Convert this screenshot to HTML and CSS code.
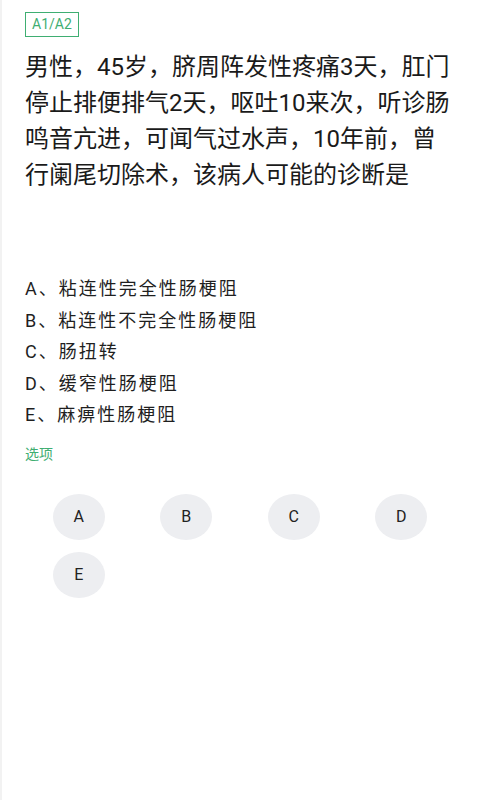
FILE: index.html
```html
<!DOCTYPE html>
<html lang="zh-CN">
<head>
<meta charset="utf-8">
<title>题目</title>
<link rel="stylesheet" href="styles.css">
</head>
<body>
<div class="page">
  <div class="tag">A1/A2</div>
  <p class="question">男性，45岁，脐周阵发性疼痛3天，肛门停止排便排气2天，呕吐10来次，听诊肠鸣音亢进，可闻气过水声，10年前，曾行阑尾切除术，该病人可能的诊断是</p>
  <ul class="options">
    <li>A、粘连性完全性肠梗阻</li>
    <li>B、粘连性不完全性肠梗阻</li>
    <li>C、肠扭转</li>
    <li>D、缓窄性肠梗阻</li>
    <li>E、麻痹性肠梗阻</li>
  </ul>
  <div class="label">选项</div>
  <div class="choices">
    <div class="cell"><span class="choice">A</span></div>
    <div class="cell"><span class="choice">B</span></div>
    <div class="cell"><span class="choice">C</span></div>
    <div class="cell"><span class="choice">D</span></div>
    <div class="cell"><span class="choice">E</span></div>
  </div>
</div>
</body>
</html>
```
FILE: styles.css
```css
html, body {
  margin: 0;
  padding: 0;
  background: #ffffff;
}
body {
  font-family: Roboto, "Noto Sans CJK SC", sans-serif;
  color: #1c1c1c;
}
.page {
  min-height: 800px;
  box-sizing: border-box;
  border-left: 2px solid #f2f2f2;
  padding: 12px 25px 0 23px;
}
.tag {
  width: fit-content;
  box-sizing: border-box;
  height: 25px;
  line-height: 23px;
  padding: 0 6px;
  border: 1px solid #3fae72;
  color: #3fae72;
  font-size: 14px;
}
.question {
  margin: 12px 0 0 0;
  padding-right: 3px;
  font-size: 24px;
  line-height: 36px;
  color: #1a1a1a;
}
.options {
  list-style: none;
  margin: 80px 0 0 0;
  padding: 0;
}
.options li {
  font-size: 18px;
  line-height: 31.5px;
  letter-spacing: 2px;
  color: #1f1f1f;
}
.label {
  margin-top: 13px;
  font-size: 14px;
  line-height: 20px;
  color: #3fae72;
}
.choices {
  margin-top: 30px;
  display: grid;
  grid-template-columns: repeat(4, 1fr);
  row-gap: 12px;
}
.cell {
  display: flex;
  justify-content: center;
}
.choice {
  width: 52px;
  height: 46px;
  border-radius: 50%;
  background: #edeef1;
  display: flex;
  align-items: center;
  justify-content: center;
  font-size: 16px;
  color: #222;
}
```
